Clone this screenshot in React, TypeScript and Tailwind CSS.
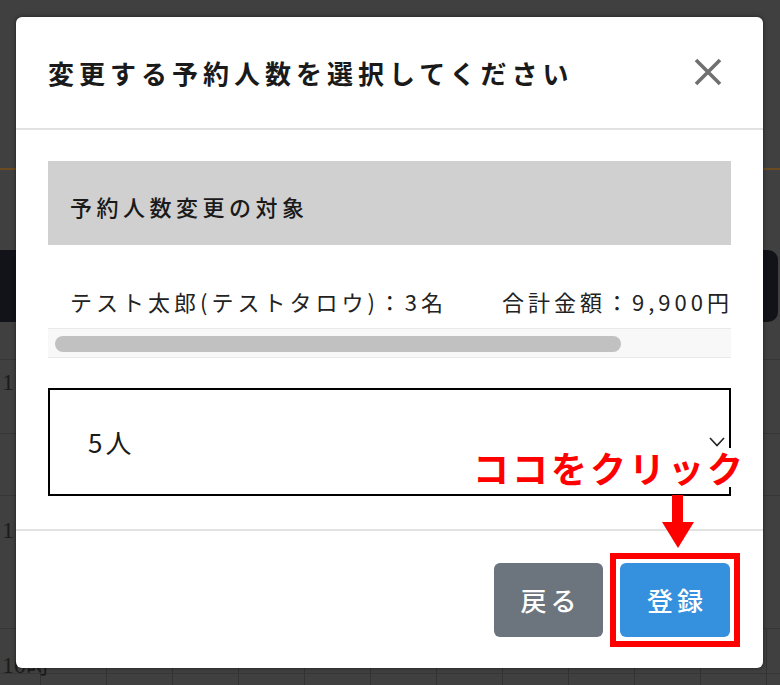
import React from "react";

const JP = "font-['Noto_Sans_CJK_JP','Noto_Sans',sans-serif]";

function GridCells() {
  return (
    <div className="flex h-full">
      <div className="w-[40px] shrink-0" />
      {Array.from({ length: 12 }).map((_, i) => (
        <div key={i} className="w-[66px] shrink-0 border-l border-[#333333]" />
      ))}
    </div>
  );
}

export default function App() {
  return (
    <div className={`relative h-[685px] w-[780px] overflow-hidden bg-[#404040] ${JP}`}>
      {/* page behind the dialog */}
      <div className="flex flex-col">
        <div className="h-[168px]" />
        <div className="h-[2px] bg-[#6b4a22]" />
        <div className="h-[80px]" />
        <div className="mr-[2px] h-[72px] rounded-r-[10px] bg-[#111318]" />
        <div className="h-[38px] border-b border-[#363636]" />
        <div className="h-[74px] border-b border-[#363636] pl-[2px] pt-[8px] font-['Liberation_Serif',serif] text-[24px] leading-[28px] text-[#1c1c1c]">
          1
        </div>
        <div className="h-[62px] border-b border-[#363636]" />
        <div className="h-[133px] border-b border-[#363636] pl-[2px] pt-[20px] font-['Liberation_Serif',serif] text-[24px] leading-[28px] text-[#1c1c1c]">
          1
        </div>
        <div className="relative h-[45px] border-b border-[#363636]">
          <GridCells />
          <div className="absolute left-[2px] top-[22px] font-['Liberation_Serif','Noto_Sans_CJK_JP',serif] text-[24px] leading-[28px] text-[#1c1c1c]">
            10時
          </div>
        </div>
        <div className="h-[20px]">
          <GridCells />
        </div>
      </div>

      {/* overlay dialog */}
      <div className="absolute inset-0 pl-[16px] pt-[17px]">
        <div className="relative w-[747px] rounded-[6px] bg-white shadow-[0_0_4px_rgba(0,0,0,0.5)]">
          {/* header */}
          <div className="flex h-[113px] items-center justify-between border-b-2 border-[#e2e2e2] pl-[32px] pr-[41px]">
            <h2 className="text-[26px] font-bold leading-[32px] tracking-[5px] text-[#1a1a1a]">
              変更する予約人数を選択してください
            </h2>
            <svg width="28" height="28" viewBox="0 0 28 28" className="mt-[-2px]">
              <path d="M2 2 L26 26 M26 2 L2 26" stroke="#707070" strokeWidth="3.6" strokeLinecap="butt" />
            </svg>
          </div>

          {/* body */}
          <div className="px-[32px] pb-[33px] pt-[31px]">
            <div className="flex h-[84px] items-center bg-[#d0d0d0] pl-[22px] pt-[6px]">
              <span className="text-[22px] font-medium leading-[28px] tracking-[4.5px] text-[#1a1a1a]">
                予約人数変更の対象
              </span>
            </div>
            <div className="flex items-center justify-between pb-[13px] pl-[22px] pr-[2px] pt-[42px] text-[22px] font-normal leading-[28px] tracking-[4px] text-[#222222]">
              <span>テスト太郎(テストタロウ)：3名</span>
              <span className="mr-[-4px]">合計金額：9,900円</span>
            </div>
            <div className="h-[30px] border-y border-[#e9e9e9] bg-[#f8f8f8] pl-[7px] pt-[7px]">
              <div className="h-[16px] w-[566px] rounded-full bg-[#c1c1c1]" />
            </div>
            <div className="mt-[30px] flex h-[108px] items-center justify-between border-2 border-black pl-[38px] pr-[4px]">
              <span className="text-[26px] leading-[32px] tracking-[3px] text-[#1a1a1a]">5人</span>
              <svg width="16" height="10" viewBox="0 0 16 10">
                <path d="M1 1 L8 8.5 L15 1" fill="none" stroke="#222" strokeWidth="1.6" />
              </svg>
            </div>
          </div>

          {/* footer */}
          <div className="flex h-[139px] items-start justify-end gap-[17px] border-t-2 border-[#e2e2e2] pr-[33px] pt-[32px]">
            <button className="h-[74px] w-[109px] rounded-[6px] bg-[#6c757d] pl-[4px] text-[26px] font-medium leading-[32px] tracking-[4px] text-white">
              戻る
            </button>
            <div className="relative">
              <button className="h-[74px] w-[110px] rounded-[6px] bg-[#3590dd] pl-[4px] text-[26px] font-medium leading-[32px] tracking-[4px] text-white">
                登録
              </button>
              <div className="absolute -inset-[10px] border-[6px] border-[#ff0000]" />
            </div>
          </div>

          {/* annotation */}
          <div className="absolute left-[455px] top-[431px] bg-white pl-[2px] pr-[2px] text-[36px] font-bold leading-[39px] tracking-[3px] text-[#ff0000]">
            ココをクリック
          </div>
          <svg className="absolute left-[644px] top-[478px]" width="36" height="54" viewBox="0 0 36 54">
            <rect x="12" y="0" width="11" height="29" fill="#ff0000" />
            <polygon points="2,27 34,27 18,53" fill="#ff0000" />
          </svg>
        </div>
      </div>
    </div>
  );
}
